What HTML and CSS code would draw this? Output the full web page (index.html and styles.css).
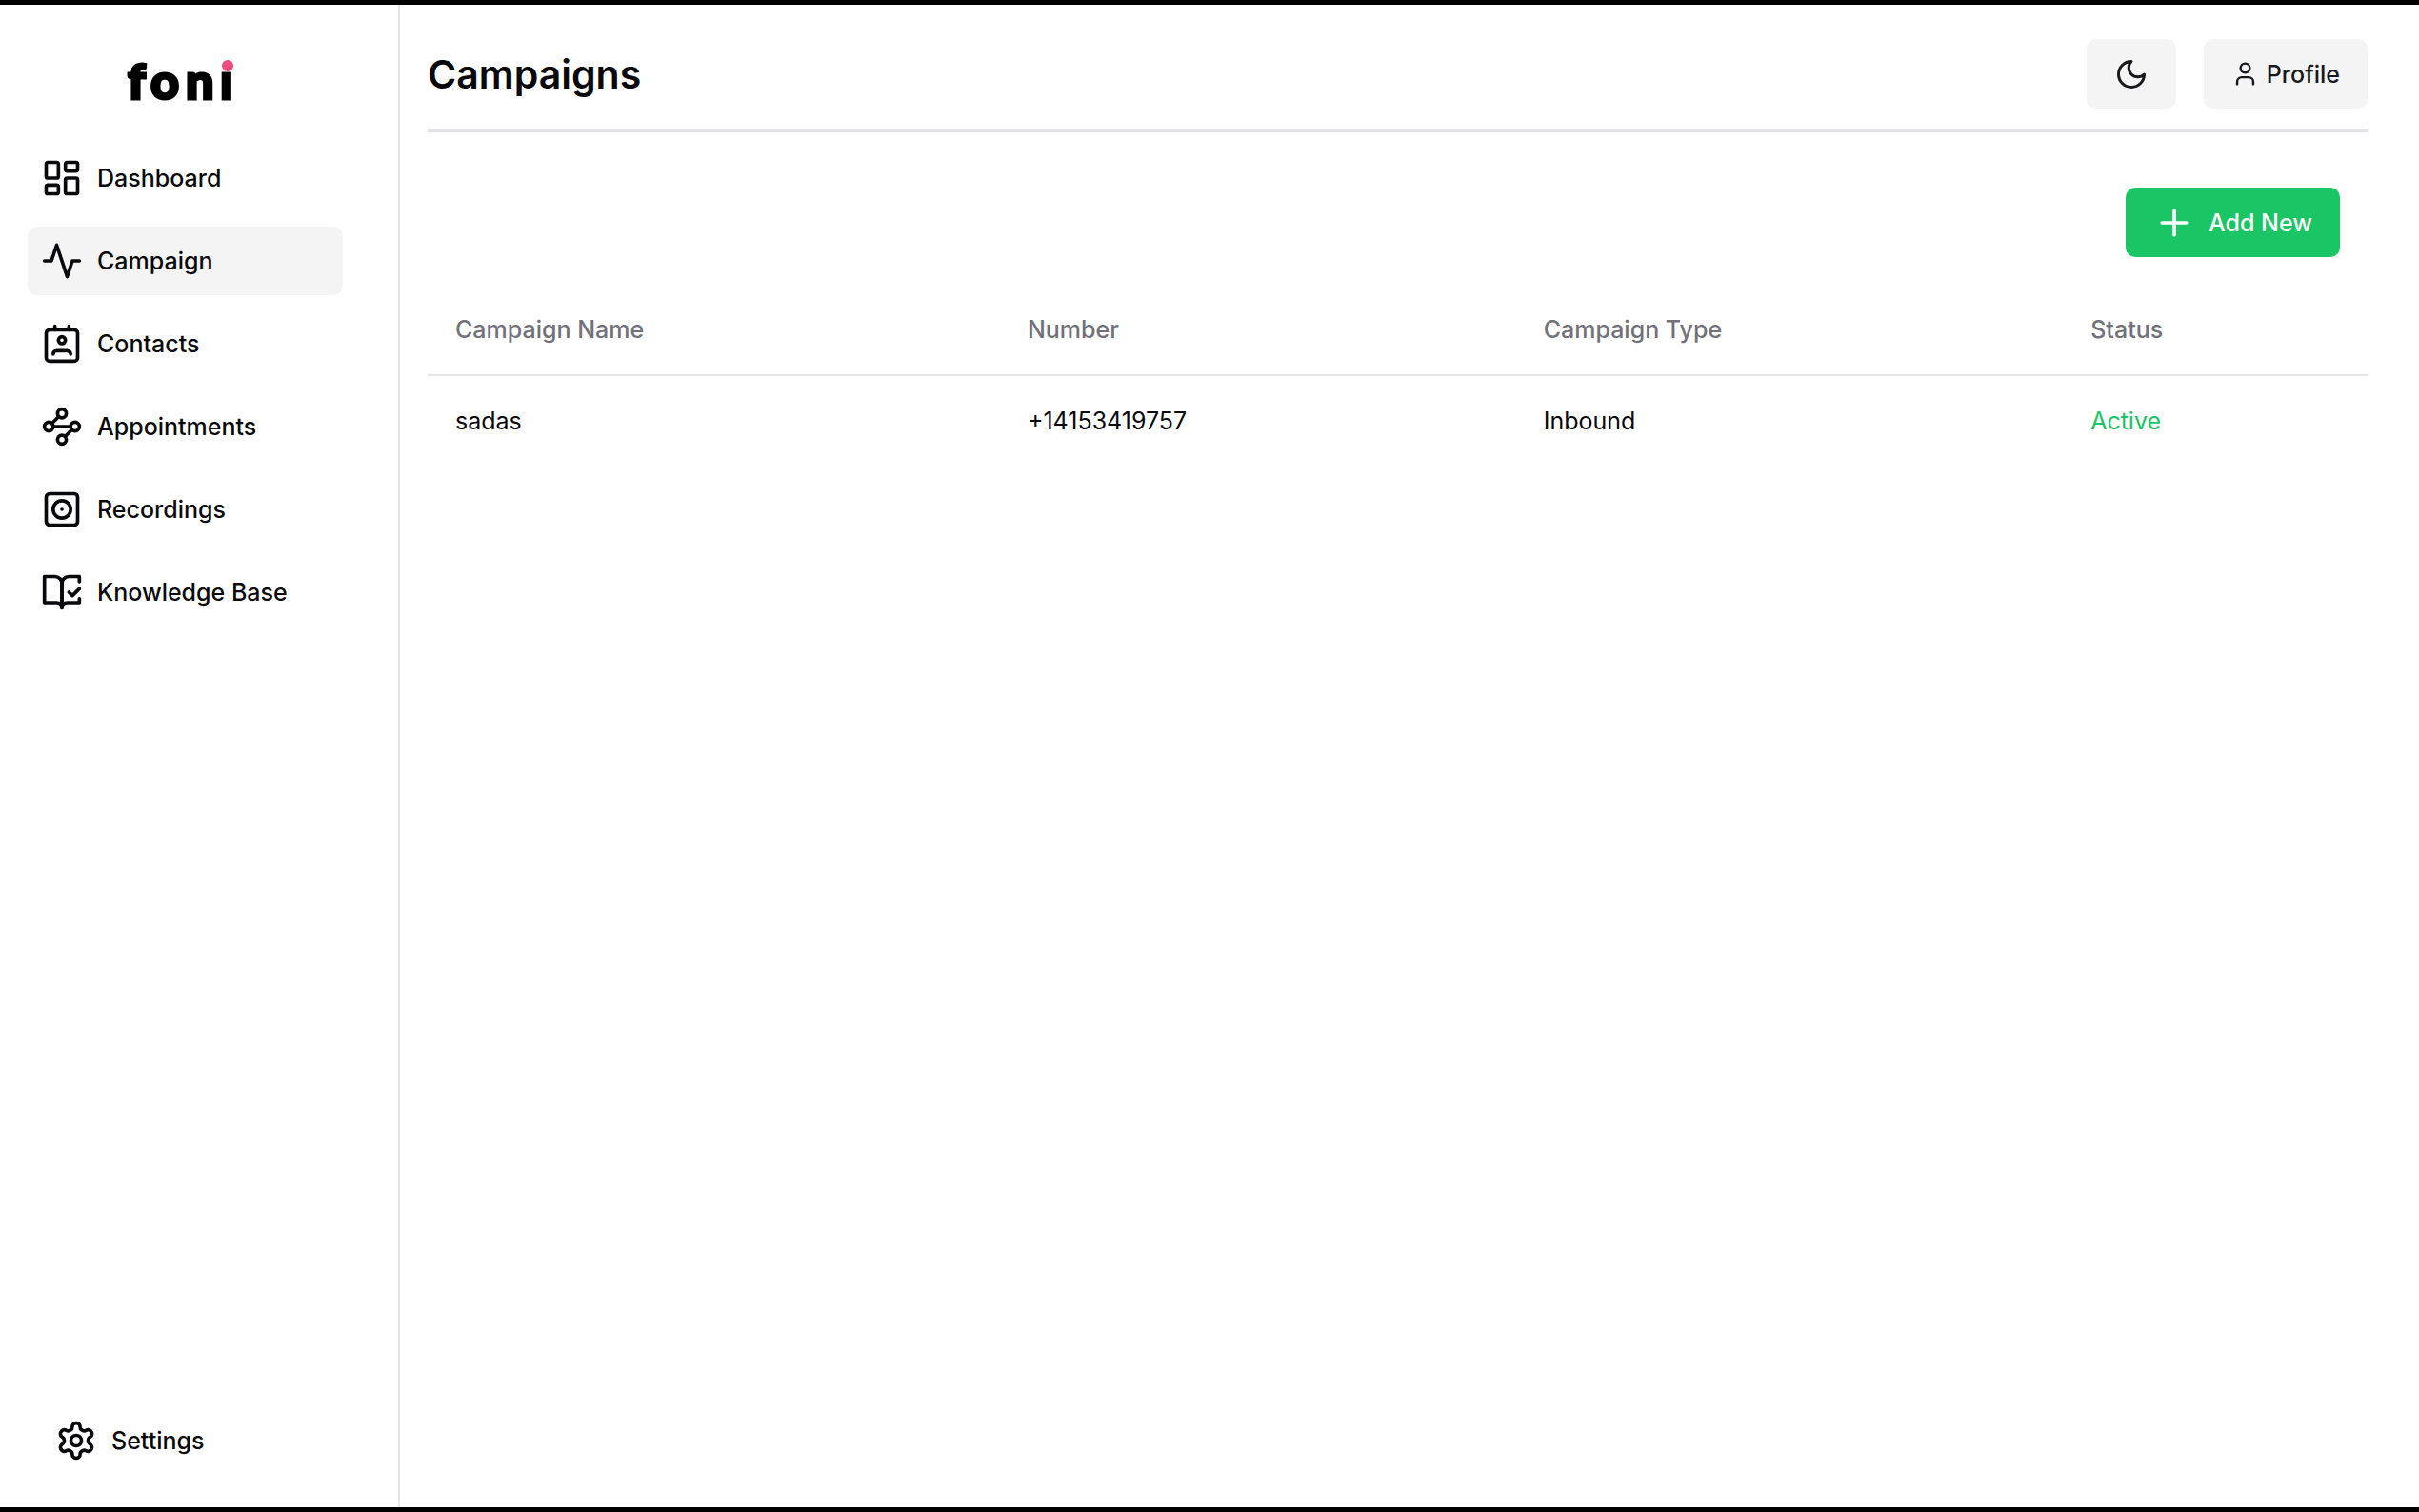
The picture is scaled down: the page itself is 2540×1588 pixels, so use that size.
FILE: index.html
```html
<!DOCTYPE html>
<html lang="en">
<head>
    <meta charset="UTF-8">
    <meta name="viewport" content="width=device-width, initial-scale=1.0">
    <title>foni - Campaigns</title>
    <link rel="stylesheet" href="styles.css">
</head>
<body>
    <div class="app">
        <aside class="sidebar">
            <a class="logo" href="#">
                <svg width="120" height="74" viewBox="0 0 120 74" role="img" aria-label="foni">
                    <text class="logo-text" y="59" x="4 28 65 101">fonı</text>
                    <circle class="logo-dot" cx="109" cy="24" r="6"/>
                </svg>
            </a>

            <nav class="nav">
                <a class="nav-item" href="#">
                    <svg class="icon" viewBox="0 0 24 24"><rect width="7" height="9" x="3" y="3" rx="1"/><rect width="7" height="5" x="14" y="3" rx="1"/><rect width="7" height="9" x="14" y="12" rx="1"/><rect width="7" height="5" x="3" y="16" rx="1"/></svg>
                    <span>Dashboard</span>
                </a>
                <a class="nav-item active" href="#" aria-current="page">
                    <svg class="icon" viewBox="0 0 24 24"><path d="M22 12h-4l-3 9L9 3l-3 9H2"/></svg>
                    <span>Campaign</span>
                </a>
                <a class="nav-item" href="#">
                    <svg class="icon" viewBox="0 0 24 24"><path d="M17 18a2 2 0 0 0-2-2H9a2 2 0 0 0-2 2"/><rect width="18" height="18" x="3" y="4" rx="2"/><circle cx="12" cy="10" r="2"/><path d="M8 2v2M16 2v2"/></svg>
                    <span>Contacts</span>
                </a>
                <a class="nav-item" href="#">
                    <svg class="icon" viewBox="0 0 24 24"><circle cx="12" cy="4.500" r="2.500"/><path d="m10.200 6.300-3.900 3.900"/><circle cx="4.500" cy="12" r="2.500"/><path d="M7 12h10"/><circle cx="19.500" cy="12" r="2.500"/><path d="m13.800 17.700 3.900-3.900"/><circle cx="12" cy="19.500" r="2.500"/></svg>
                    <span>Appointments</span>
                </a>
                <a class="nav-item" href="#">
                    <svg class="icon" viewBox="0 0 24 24"><rect width="18" height="18" x="3" y="3" rx="2"/><circle cx="12" cy="12" r="5"/><path d="M12 12h.01"/></svg>
                    <span>Recordings</span>
                </a>
                <a class="nav-item" href="#">
                    <svg class="icon" viewBox="0 0 24 24"><path d="M8 3H2v15h7c1.700 0 3 1.300 3 3V7c0-2.200-1.800-4-4-4Z"/><path d="m16 12 2 2 4-4"/><path d="M22 6V3h-6c-2.200 0-4 1.800-4 4v14c0-1.700 1.300-3 3-3h7v-2.300"/></svg>
                    <span>Knowledge Base</span>
                </a>
            </nav>

            <div class="sidebar-footer">
                <a class="nav-item" href="#">
                    <svg class="icon" viewBox="0 0 24 24"><path d="M12.220 2h-.44a2 2 0 0 0-2 2v.18a2 2 0 0 1-1 1.730l-.43.25a2 2 0 0 1-2 0l-.15-.08a2 2 0 0 0-2.730.73l-.22.38a2 2 0 0 0 .73 2.730l.15.1a2 2 0 0 1 1 1.720v.51a2 2 0 0 1-1 1.740l-.15.09a2 2 0 0 0-.73 2.730l.22.38a2 2 0 0 0 2.730.73l.15-.08a2 2 0 0 1 2 0l.43.25a2 2 0 0 1 1 1.730V20a2 2 0 0 0 2 2h.44a2 2 0 0 0 2-2v-.18a2 2 0 0 1 1-1.730l.43-.25a2 2 0 0 1 2 0l.15.08a2 2 0 0 0 2.730-.73l.22-.39a2 2 0 0 0-.73-2.730l-.15-.08a2 2 0 0 1-1-1.740v-.5a2 2 0 0 1 1-1.740l.15-.09a2 2 0 0 0 .73-2.730l-.22-.38a2 2 0 0 0-2.730-.73l-.15.08a2 2 0 0 1-2 0l-.43-.25a2 2 0 0 1-1-1.730V4a2 2 0 0 0-2-2z"/><circle cx="12" cy="12" r="3"/></svg>
                    <span>Settings</span>
                </a>
            </div>
        </aside>

        <main class="main">
            <header class="header">
                <h1>Campaigns</h1>
                <div class="header-actions">
                    <button class="btn" type="button" aria-label="Toggle theme">
                        <svg class="icon icon-moon" viewBox="0 0 24 24"><path d="M12 3a6 6 0 0 0 9 9 9 9 0 1 1-9-9Z"/></svg>
                    </button>
                    <button class="btn btn-profile" type="button">
                        <svg class="icon icon-user" viewBox="0 0 24 24"><path d="M19 21v-2a4 4 0 0 0-4-4H9a4 4 0 0 0-4 4v2"/><circle cx="12" cy="7" r="4"/></svg>
                        Profile
                    </button>
                </div>
            </header>

            <div class="toolbar">
                <button class="btn btn-add" type="button">
                    <svg class="icon" viewBox="0 0 24 24"><path d="M5 12h14M12 5v14"/></svg>
                    Add New
                </button>
            </div>

            <table class="campaigns">
                <thead>
                    <tr>
                        <th class="col-name" scope="col">Campaign Name</th>
                        <th class="col-number" scope="col">Number</th>
                        <th class="col-type" scope="col">Campaign Type</th>
                        <th class="col-status" scope="col">Status</th>
                    </tr>
                </thead>
                <tbody>
                    <tr>
                        <td>sadas</td>
                        <td>+14153419757</td>
                        <td>Inbound</td>
                        <td class="status-active">Active</td>
                    </tr>
                </tbody>
            </table>
        </main>
    </div>
</body>
</html>
```
FILE: styles.css
```css
* {
    box-sizing: border-box;
}

body {
    margin: 0;
    font-family: Inter, "Liberation Sans", sans-serif;
    font-size: 25px;
    line-height: 36px;
    color: #09090b;
    background: #fff;
}

.app {
    display: flex;
    min-height: 100vh;
    border-top: 5px solid #000;
    border-bottom: 5px solid #000;
}

.icon {
    width: 44px;
    height: 44px;
    flex-shrink: 0;
    fill: none;
    stroke: currentColor;
    stroke-width: 2;
    stroke-linecap: round;
    stroke-linejoin: round;
}

/* Sidebar */
.sidebar {
    display: flex;
    flex-direction: column;
    width: 420px;
    flex-shrink: 0;
    padding: 40px 58px 34px 29px;
    border-right: 2px solid #e4e4e7;
}

.logo {
    display: block;
    margin: 0 0 32px 101px;
}

.logo svg {
    display: block;
}

.logo-text {
    font-family: Lato, sans-serif;
    font-size: 52px;
    font-weight: 900;
    fill: #000;
    stroke: #000;
    stroke-width: 3;
}

.logo-dot {
    fill: #ee4b7e;
}

.nav {
    display: flex;
    flex-direction: column;
    gap: 15px;
}

.nav-item {
    display: flex;
    align-items: center;
    gap: 15px;
    height: 72px;
    padding: 0 14px;
    border-radius: 10px;
    color: inherit;
    font-weight: 500;
    text-decoration: none;
}

.nav-item.active,
.nav-item:hover {
    background: #f4f4f4;
}

.sidebar-footer {
    margin-top: auto;
    padding-left: 15px;
}

/* Content */
.main {
    flex: 1;
    min-width: 0;
    padding: 0 54px 0 29px;
}

.header {
    display: flex;
    align-items: center;
    justify-content: space-between;
    padding: 36px 0 21px;
    border-bottom: 4px solid #e4e4e7;
}

.header h1 {
    margin: 0;
    font-size: 41px;
    line-height: 58px;
    font-weight: 600;
}

.header-actions {
    display: flex;
    gap: 29px;
}

.btn {
    display: inline-flex;
    align-items: center;
    justify-content: center;
    height: 73px;
    padding: 0 29px;
    border: none;
    border-radius: 10px;
    background: #f4f4f4;
    color: #18181b;
    font: inherit;
    font-weight: 500;
    cursor: pointer;
}

.btn-profile {
    gap: 8px;
}

.btn-add {
    gap: 14px;
    background: #1ac566;
    color: #fff;
}

.icon-moon {
    width: 36px;
    height: 36px;
}

.icon-user {
    width: 29px;
    height: 29px;
}

.toolbar {
    display: flex;
    justify-content: flex-end;
    padding: 58px 29px 29px;
}

.campaigns {
    width: 100%;
    table-layout: fixed;
    border-collapse: collapse;
    text-align: left;
}

.campaigns th,
.campaigns td {
    padding: 29px;
}

.campaigns th {
    border-bottom: 2px solid #e4e4e7;
    color: #71717a;
    font-weight: 500;
}

.col-name {
    width: 29.5%;
}

.col-number {
    width: 26.6%;
}

.col-type {
    width: 28.2%;
}

.campaigns .status-active {
    color: #1ac566;
}
```
